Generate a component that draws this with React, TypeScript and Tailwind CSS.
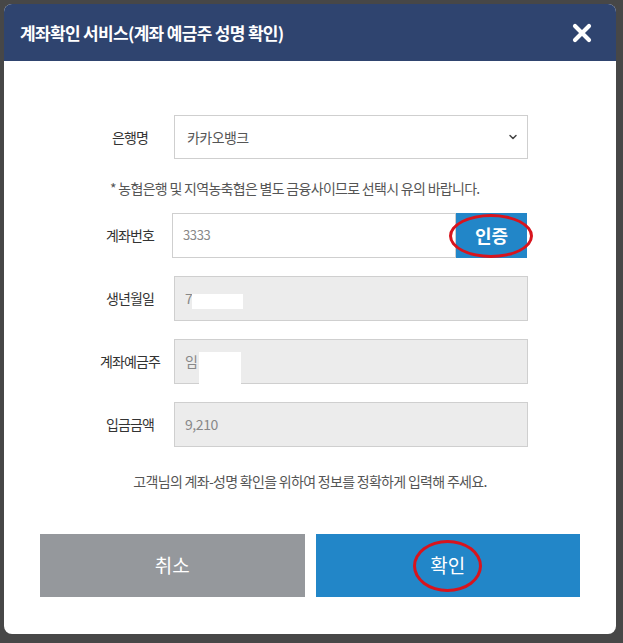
import { ChevronDown } from "lucide-react";

const font = { fontFamily: '"Noto Sans CJK KR", "Noto Sans", sans-serif' };

function Field({
  label,
  value,
  mask,
}: {
  label: string;
  value: string;
  mask?: string;
}) {
  return (
    <div className="flex h-[44px] items-center">
      <div className="w-[80px] text-center text-[14px] tracking-[-0.06em] text-[#333]">{label}</div>
      <div className="relative ml-[4px] flex h-[45px] w-[354px] items-center border border-[#cfcfcf] bg-[#ececec] pl-[10px] text-[14px] tracking-[-0.03em] text-[#888]">
        {value}
        {mask && <div className={`absolute bg-white ${mask}`} />}
      </div>
    </div>
  );
}

export default function App() {
  return (
    <div className="h-[643px] w-[623px] bg-[#474747] p-[4px]" style={font}>
      <div className="flex h-[630px] w-[612px] flex-col overflow-hidden rounded-[8px] bg-white">
        {/* Header */}
        <div className="flex h-[57px] shrink-0 items-center justify-between bg-[#2f446f] pl-[16px] pr-[24px]">
          <h1 className="text-[17px] font-bold tracking-[-0.04em] text-white">
            계좌확인 서비스(계좌 예금주 성명 확인)
          </h1>
          <svg width="20" height="20" viewBox="0 0 20 20">
            <path d="M3 3 L17 17 M17 3 L3 17" stroke="white" strokeWidth="4.2" strokeLinecap="round" />
          </svg>
        </div>

        {/* Form */}
        <div className="pl-[86px]">
          <div className="mt-[54px] flex h-[44px] items-center">
            <div className="w-[80px] text-center text-[14px] tracking-[-0.06em] text-[#333]">은행명</div>
            <div className="ml-[4px] flex h-[44px] w-[354px] items-center justify-between border border-[#cfcfcf] bg-white pl-[12px] pr-[8px] text-[14px] tracking-[-0.04em] text-[#555]">
              카카오뱅크
              <ChevronDown size={12} strokeWidth={3} className="text-[#444]" />
            </div>
          </div>

          <p className="mt-[19px] pl-[20px] text-[14px] leading-[20px] tracking-[-0.05em] text-[#555]">
            * 농협은행 및 지역농축협은 별도 금융사이므로 선택시 유의 바랍니다.
          </p>

          <div className="mt-[15px] flex h-[44px] items-center">
            <div className="w-[80px] text-center text-[14px] tracking-[-0.06em] text-[#333]">계좌번호</div>
            <div className="relative ml-[2px] flex h-[45px] w-[355px]">
              <div className="flex flex-1 items-center border border-[#cfcfcf] bg-white pl-[10px] text-[13px] tracking-[-0.03em] text-[#888]">
                3333
              </div>
              <button className="w-[71px] bg-[#2286c8] text-[18px] font-bold text-white">인증</button>
              <div className="absolute left-[277px] top-[1px] h-[44px] w-[84px] rounded-[50%] border-[3.5px] border-[#d8141d]" />
            </div>
          </div>

          <div className="mt-[19px] flex flex-col gap-[19px]">
            <Field label="생년월일" value="7" mask="left-[17px] top-[17px] h-[15px] w-[51px]" />
            <Field label="계좌예금주" value="임" mask="left-[24px] top-[12px] h-[33px] w-[42px]" />
            <Field label="입금금액" value="9,210" />
          </div>
        </div>

        <p className="mt-[25px] text-center text-[14px] leading-[20px] tracking-[-0.05em] text-[#555]">
          고객님의 계좌-성명 확인을 위하여 정보를 정확하게 입력해 주세요.
        </p>

        {/* Buttons */}
        <div className="mt-[43px] flex gap-[11px] px-[36px]">
          <button className="h-[63px] flex-1 bg-[#95989c] text-[19px] text-white">취소</button>
          <button className="relative h-[63px] flex-1 bg-[#2286c8] text-[19px] text-white">
            확인
            <span className="absolute left-[97px] top-[6px] h-[52px] w-[69px] rounded-[50%] border-[3.5px] border-[#d8141d]" />
          </button>
        </div>
      </div>
    </div>
  );
}
